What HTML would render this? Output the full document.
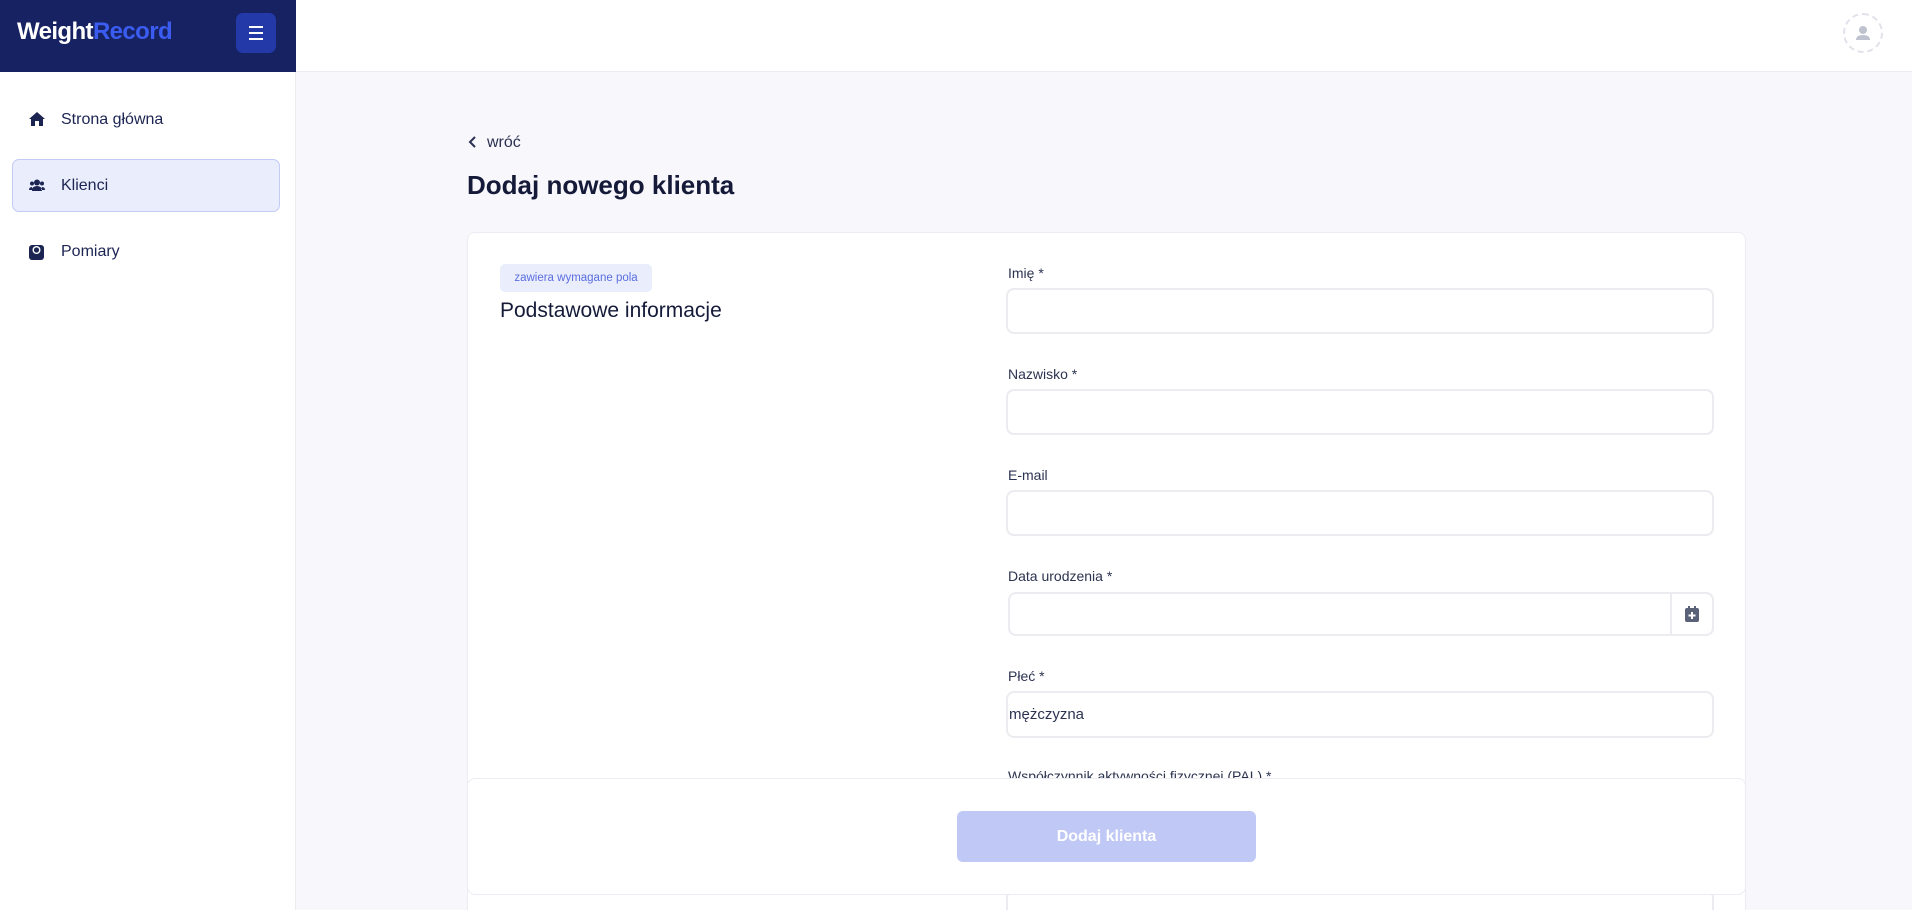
<!DOCTYPE html>
<html><head><meta charset="utf-8"><style>
*{box-sizing:border-box;margin:0;padding:0}
html{width:1912px;height:910px;overflow:hidden}
body{width:1912px;height:910px;overflow:hidden;font-family:"Liberation Sans",sans-serif;background:#f8f7fc;position:relative;color:#1a2040}
.abs{position:absolute}
.side{left:0;top:72px;width:296px;height:838px;background:#fff;border-right:1px solid #ebebf0}
.brand{left:0;top:0;width:296px;height:72px;background:#172263}
.logo{left:17px;top:18px;font-size:24px;font-weight:bold;color:#fff;letter-spacing:-0.6px}
.logo span{color:#3b5cf0}
.mbtn{left:236px;top:13px;width:40px;height:40px;border-radius:7px;background:#2339a8}
.mbtn i{position:absolute;left:13px;width:14px;height:2px;background:#fff}
.top{left:296px;top:0;width:1616px;height:72px;background:#fff;border-bottom:1px solid #ebebf2}
.nav{font-size:16px;color:#1c2452;left:61px}
.active{left:12px;top:159px;width:268px;height:53px;background:#eaedfb;border:1px solid #c3cbf6;border-radius:7px}
.card{left:467px;top:232px;width:1279px;height:700px;background:#fff;border:1px solid #ececf2;border-radius:8px}
.badge{left:500px;top:264px;width:152px;height:28px;background:#eaedfb;border-radius:5px;color:#5a6ee0;font-size:11.5px;line-height:28px;text-align:center}
.lbl{left:1008px;font-size:14px;color:#2c3350}
.inp{left:1006px;width:708px;height:46px;border:2px solid #ebebf0;border-radius:8px;background:#fff}
.foot{left:467px;top:778px;width:1279px;height:117px;background:#fff;border:1px solid #ececf2;border-radius:8px}
.btn{left:957px;top:811px;width:299px;height:51px;background:#c0c8f5;border-radius:6px;color:#fff;font-weight:bold;font-size:16px;text-align:center;line-height:51px}
</style></head><body>
<div class="abs top"></div>
<div class="abs" style="left:1843px;top:13px;width:40px;height:40px;border:2px dashed #e2e3ea;border-radius:50%"></div>
<svg class="abs" style="left:1853px;top:23px" width="20" height="20" viewBox="0 0 20 20"><circle cx="10" cy="7" r="4" fill="#bfc3cf"/><path d="M3 17 Q3 12 10 12 Q17 12 17 17Z" fill="#bfc3cf"/></svg>
<div class="abs side"></div>
<div class="abs brand"></div>
<div class="abs logo">Weight<span>Record</span></div>
<div class="abs mbtn"><i style="top:13px"></i><i style="top:19px"></i><i style="top:25px"></i></div>
<div class="abs active"></div>
<svg class="abs" style="left:29px;top:112px" width="16" height="14" viewBox="0 0 16 14"><path d="M8 0 L16 7 L14 7 L14 14 L10 14 L10 9 L6 9 L6 14 L2 14 L2 7 L0 7Z" fill="#1c2452"/></svg>
<div class="abs nav" style="top:111px">Strona główna</div>
<svg class="abs" style="left:29px;top:179px" width="16" height="13" viewBox="0 0 16 13"><circle cx="8" cy="3.5" r="3" fill="#1c2452"/><circle cx="3" cy="4.5" r="2" fill="#1c2452"/><circle cx="13" cy="4.5" r="2" fill="#1c2452"/><path d="M3 12 Q3 7 8 7 Q13 7 13 12Z M0 11 Q0 8 3 8 L4 11Z M16 11 Q16 8 13 8 L12 11Z" fill="#1c2452"/></svg>
<div class="abs nav" style="top:177px">Klienci</div>
<svg class="abs" style="left:29px;top:244px" width="15" height="16" viewBox="0 0 15 16"><rect x="0" y="1" width="15" height="15" rx="3" fill="#1c2452"/><circle cx="7.5" cy="6" r="4" fill="#fff"/><circle cx="7.5" cy="6" r="2.6" fill="#1c2452"/></svg>
<div class="abs nav" style="top:243px">Pomiary</div>
<svg class="abs" style="left:468px;top:136px" width="10" height="12" viewBox="0 0 10 12"><path d="M7 1 L2 6 L7 11" stroke="#2a3050" stroke-width="2" fill="none"/></svg>
<div class="abs" style="left:487px;top:134px;font-size:16px;color:#2a3050">wróć</div>
<div class="abs" style="left:467px;top:170px;font-size:26px;font-weight:bold;color:#141a38">Dodaj nowego klienta</div>
<div class="abs card" style="height:678px;border-bottom:none;border-radius:8px 8px 0 0"></div>
<div class="abs badge">zawiera wymagane pola</div>
<div class="abs" style="left:500px;top:299px;font-size:21px;color:#141a38">Podstawowe informacje</div>
<div class="abs lbl" style="top:265px">Imię *</div>
<div class="abs inp" style="top:288px"></div>
<div class="abs lbl" style="top:366px">Nazwisko *</div>
<div class="abs inp" style="top:389px"></div>
<div class="abs lbl" style="top:467px">E-mail</div>
<div class="abs inp" style="top:490px"></div>
<div class="abs lbl" style="top:568px">Data urodzenia *</div>
<div class="abs inp" style="top:592px;left:1008px;width:706px;height:44px"></div>
<div class="abs" style="left:1670px;top:594px;width:2px;height:40px;background:#ebebf0"></div>
<svg class="abs" style="left:1685px;top:606px" width="14" height="16" viewBox="0 0 14 16"><rect x="3" y="0" width="2" height="3" fill="#5a6278"/><rect x="9" y="0" width="2" height="3" fill="#5a6278"/><rect x="0" y="2" width="14" height="14" rx="2" fill="#5a6278"/><path d="M7 6 V13 M3.5 9.5 H10.5" stroke="#fff" stroke-width="2"/></svg>
<div class="abs lbl" style="top:668px">Płeć *</div>
<div class="abs inp" style="top:691px;height:47px"></div>
<div class="abs" style="left:1009px;top:706px;font-size:15px;color:#2c3350">mężczyzna</div>
<div class="abs lbl" style="top:768px">Współczynnik aktywności fizycznej (PAL) *</div>
<div class="abs inp" style="top:890px;height:20px;border-bottom:none;border-radius:8px 8px 0 0"></div>
<div class="abs foot"></div>
<div class="abs btn">Dodaj klienta</div>
</body></html>
